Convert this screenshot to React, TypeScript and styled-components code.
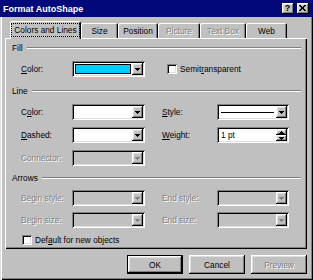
import * as React from 'react';
import styled, { createGlobalStyle } from 'styled-components';

const raised = `inset -1px -1px #000, inset 1px 1px #fff, inset -2px -2px #808080, inset 2px 2px #dfdfdf`;
const sunken = `inset 1px 1px #808080, inset -1px -1px #fff, inset 2px 2px #000, inset -2px -2px #dfdfdf`;

const GlobalStyle = createGlobalStyle`
  html, body {
    margin: 0;
    padding: 0;
    background: #c0c0c0;
  }
  body {
    font-family: "Liberation Sans", Arial, sans-serif;
    font-size: 8.3px;
    color: #000;
  }
`;

const Window = styled.div`
  width: 313px;
  height: 280px;
  box-sizing: border-box;
  display: flex;
  flex-direction: column;
  background: #c0c0c0;
  box-shadow: inset 1px 0 #dfdfdf, inset 2px 0 #fff, inset -1px -1px #000, inset -2px -2px #808080;
`;

const TitleBar = styled.div`
  height: 17px;
  flex: none;
  display: flex;
  align-items: center;
  background: #00087a;
  padding: 0 4px 0 3px;
`;

const TitleText = styled.div`
  flex: 1;
  color: #fff;
  font-weight: bold;
  font-size: 9px;
`;

const TitleButtons = styled.div`
  display: flex;
  gap: 3px;
`;

const TitleButton = styled.div`
  width: 12px;
  height: 11px;
  box-sizing: border-box;
  background: #c0c0c0;
  box-shadow: ${raised};
  display: flex;
  align-items: center;
  justify-content: center;
  font-weight: bold;
  font-size: 9px;
  line-height: 1;
  padding: 0 1px 1px 0;
`;

const Body = styled.div`
  flex: 1;
  display: flex;
  flex-direction: column;
  padding: 4px 6px 0 5px;
`;

const TabStrip = styled.div`
  height: 17px;
  display: flex;
  align-items: flex-end;
  padding-left: 5px;
`;

const Tab = styled.div<{ $w: number; $active?: boolean; $disabled?: boolean }>`
  position: relative;
  z-index: ${p => (p.$active ? 1 : 0)};
  width: ${p => p.$w}px;
  height: ${p => (p.$active ? 18 : 15)}px;
  margin-bottom: ${p => (p.$active ? -1 : 0)}px;
  box-sizing: border-box;
  padding-bottom: ${p => (p.$active ? 1 : 0)}px;
  background: #c0c0c0;
  border-top-left-radius: 2px;
  border-top-right-radius: 2px;
  box-shadow: inset 1px 1px #fff, inset -1px 0 #000, inset -2px 0 #808080;
  display: flex;
  align-items: center;
  justify-content: center;
  color: ${p => (p.$disabled ? '#808080' : '#000')};
  text-shadow: ${p => (p.$disabled ? '1px 1px #fff' : 'none')};
`;

const FocusText = styled.span`
  outline: 1px dotted #000;
  padding: 1px 2px;
`;

const Panel = styled.div`
  height: 211px;
  box-sizing: border-box;
  padding: 4px 6px 0 7px;
  display: flex;
  flex-direction: column;
  box-shadow: inset 1px 1px #fff, inset -1px -1px #000, inset -2px -2px #808080;
`;

const Group = styled.div<{ $gap: number; $mt?: number }>`
  display: flex;
  flex-direction: column;
  gap: ${p => p.$gap}px;
  margin-top: ${p => p.$mt || 0}px;
`;

const GroupHeader = styled.div`
  height: 12px;
  display: flex;
  align-items: center;
  gap: 4px;
`;

const Etched = styled.div`
  flex: 1;
  height: 0;
  border-top: 1px solid #808080;
  border-bottom: 1px solid #fff;
`;

const Row = styled.div`
  height: 16px;
  display: grid;
  grid-template-columns: 51px 73px 17px 55px 72px;
  align-items: center;
  padding-left: 9px;
`;

const Label = styled.div<{ $disabled?: boolean }>`
  white-space: nowrap;
  color: ${p => (p.$disabled ? '#808080' : '#000')};
  text-shadow: ${p => (p.$disabled ? '1px 1px #fff' : 'none')};
`;

const Field = styled.div<{ $disabled?: boolean }>`
  height: 16px;
  box-sizing: border-box;
  padding: 2px;
  display: flex;
  background: ${p => (p.$disabled ? '#c0c0c0' : '#fff')};
  box-shadow: ${sunken};
`;

const FieldValue = styled.div`
  flex: 1;
  min-width: 0;
  display: flex;
  align-items: center;
  padding-left: 2px;
`;

const Swatch = styled.div`
  flex: 1;
  align-self: stretch;
  margin: 1px 1px 1px -1px;
  background: #00ccff;
  border: 1px solid #000;
`;

const LineSample = styled.div`
  flex: 1;
  height: 1px;
  background: #000;
  margin-right: 2px;
`;

const DropButton = styled.div`
  width: 11px;
  background: #c0c0c0;
  box-shadow: ${raised};
  display: flex;
  align-items: center;
  justify-content: center;
`;

const Spinner = styled.div`
  width: 11px;
  display: flex;
  flex-direction: column;
`;

const SpinHalf = styled.div`
  flex: 1;
  background: #c0c0c0;
  box-shadow: ${raised};
  display: flex;
  align-items: center;
  justify-content: center;
`;

const CheckRow = styled.label<{ $indent: number }>`
  display: flex;
  align-items: center;
  gap: 3px;
  padding-left: ${p => p.$indent}px;
  grid-column: 4 / 6;
  white-space: nowrap;
`;

const CheckBox = styled.span`
  width: 10px;
  height: 10px;
  box-sizing: border-box;
  background: #fff;
  box-shadow: ${sunken};
`;

const Footer = styled.div`
  display: flex;
  justify-content: flex-end;
  gap: 6px;
  margin-top: 6px;
`;

const Button = styled.div<{ $default?: boolean; $disabled?: boolean }>`
  width: 56px;
  height: 19px;
  box-sizing: border-box;
  display: flex;
  align-items: center;
  justify-content: center;
  background: #c0c0c0;
  color: ${p => (p.$disabled ? '#808080' : '#000')};
  text-shadow: ${p => (p.$disabled ? '1px 1px #fff' : 'none')};
  box-shadow: ${p =>
    p.$default
      ? `inset 0 0 0 1px #000, inset -2px -2px #000, inset 2px 2px #fff, inset -3px -3px #808080, inset 3px 3px #dfdfdf`
      : raised};
`;

const Arrow = ({ color = '#000', up = false }: { color?: string; up?: boolean }) => (
  <svg width="5" height="3" viewBox="0 0 5 3" style={up ? { transform: 'rotate(180deg)' } : undefined}>
    <path d="M0 0h5v1H0zM1 1h3v1H1zM2 2h1v1H2z" fill={color} />
  </svg>
);

const Combo = ({ disabled, children }: { disabled?: boolean; children?: React.ReactNode }) => (
  <Field $disabled={disabled}>
    <FieldValue>{children}</FieldValue>
    <DropButton>
      <Arrow color={disabled ? '#808080' : '#000'} />
    </DropButton>
  </Field>
);

const tabs = [
  { name: 'Colors and Lines', w: 71, active: true },
  { name: 'Size', w: 37 },
  { name: 'Position', w: 40 },
  { name: 'Picture', w: 42, disabled: true },
  { name: 'Text Box', w: 46, disabled: true },
  { name: 'Web', w: 41 },
];

export default function App() {
  return (
    <>
      <GlobalStyle />
      <Window>
        <TitleBar>
          <TitleText>Format AutoShape</TitleText>
          <TitleButtons>
            <TitleButton>?</TitleButton>
            <TitleButton>
              <svg width="7" height="6" viewBox="0 0 7 6">
                <path d="M0 0h2v1H0zM5 0h2v1H5zM1 1h2v1H1zM4 1h2v1H4zM2 2h3v2H2zM1 4h2v1H1zM4 4h2v1H4zM0 5h2v1H0zM5 5h2v1H5z" fill="#000" />
              </svg>
            </TitleButton>
          </TitleButtons>
        </TitleBar>
        <Body>
          <TabStrip>
            {tabs.map(t => (
              <Tab key={t.name} $w={t.w} $active={t.active} $disabled={t.disabled}>
                {t.active ? <FocusText>{t.name}</FocusText> : t.name}
              </Tab>
            ))}
          </TabStrip>
          <Panel>
            <Group $gap={7}>
              <GroupHeader>
                Fill
                <Etched />
              </GroupHeader>
              <Row>
                <Label><u>C</u>olor:</Label>
                <Combo>
                  <Swatch />
                </Combo>
                <span />
                <CheckRow $indent={5}>
                  <CheckBox />
                  <span>Semit<u>r</u>ansparent</span>
                </CheckRow>
              </Row>
            </Group>

            <Group $gap={7} $mt={8}>
              <GroupHeader>
                Line
                <Etched />
              </GroupHeader>
              <Row>
                <Label>C<u>o</u>lor:</Label>
                <Combo />
                <span />
                <Label><u>S</u>tyle:</Label>
                <Combo>
                  <LineSample />
                </Combo>
              </Row>
              <Row>
                <Label><u>D</u>ashed:</Label>
                <Combo />
                <span />
                <Label><u>W</u>eight:</Label>
                <Field>
                  <FieldValue>1 pt</FieldValue>
                  <Spinner>
                    <SpinHalf>
                      <Arrow up />
                    </SpinHalf>
                    <SpinHalf>
                      <Arrow />
                    </SpinHalf>
                  </Spinner>
                </Field>
              </Row>
              <Row>
                <Label $disabled>Connector:</Label>
                <Combo disabled />
              </Row>
            </Group>

            <Group $gap={6} $mt={6}>
              <GroupHeader>
                Arrows
                <Etched />
              </GroupHeader>
              <Row>
                <Label $disabled>Begin style:</Label>
                <Combo disabled />
                <span />
                <Label $disabled>End style:</Label>
                <Combo disabled />
              </Row>
              <Row>
                <Label $disabled>Begin size:</Label>
                <Combo disabled />
                <span />
                <Label $disabled>End size:</Label>
                <Combo disabled />
              </Row>
            </Group>

            <Group $gap={0} $mt={7}>
              <CheckRow $indent={10}>
                <CheckBox />
                <span>Def<u>a</u>ult for new objects</span>
              </CheckRow>
            </Group>
          </Panel>
          <Footer>
            <Button $default>OK</Button>
            <Button>Cancel</Button>
            <Button $disabled>Preview</Button>
          </Footer>
        </Body>
      </Window>
    </>
  );
}
